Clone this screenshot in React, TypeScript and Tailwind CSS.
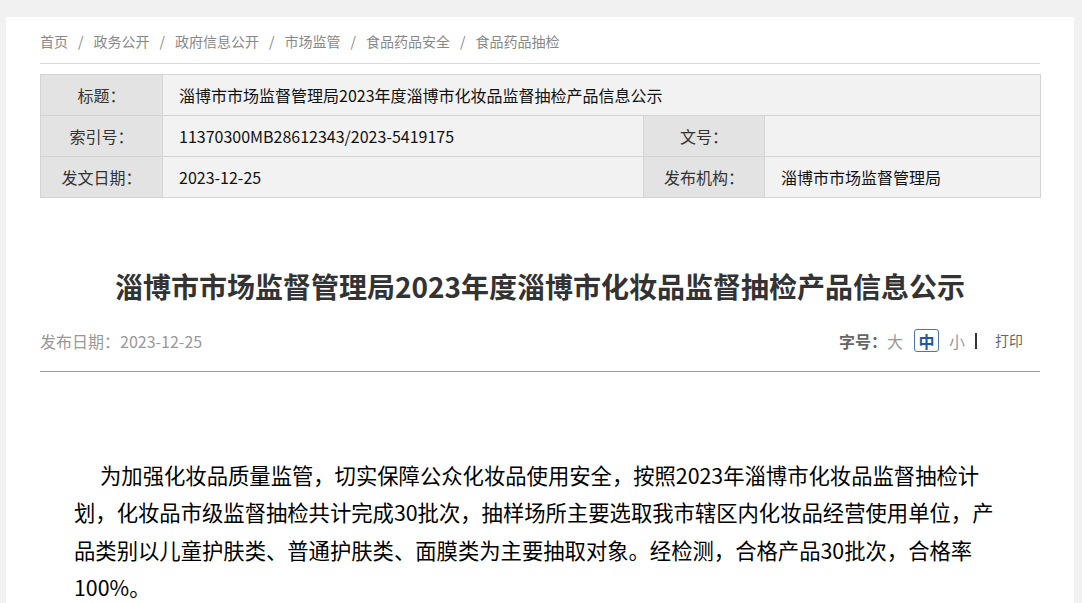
const crumbs = ['首页', '政务公开', '政府信息公开', '市场监管', '食品药品安全', '食品药品抽检'];

const title = '淄博市市场监督管理局2023年度淄博市化妆品监督抽检产品信息公示';

export default function App() {
	return (
		<div className="min-h-[603px] bg-[#f1f1f1] pt-[17px] font-['Noto_Sans_CJK_SC',sans-serif]">
			<div className="ml-[6px] w-[1068px] bg-white px-[34px] pb-10">
				{/* breadcrumb */}
				<div className="flex items-center pt-[12px] pb-[10px] h-[47px] border-b border-[#d9d9d9] text-[14px] leading-[24px] text-[#888]">
					{crumbs.map((c, i) => (
						<span key={c} className="flex items-center">
							{i > 0 && <span className="mx-[10px] text-[#888]">/</span>}
							<span>{c}</span>
						</span>
					))}
				</div>

				{/* info table */}
				<table className="mt-[10px] w-[1000px] table-fixed border-collapse text-[16px] text-[#333]">
					<colgroup>
						<col className="w-[122px]" />
						<col className="w-[481px]" />
						<col className="w-[121px]" />
						<col className="w-[276px]" />
					</colgroup>
					<tbody>
						<tr className="h-[41px]">
							<td className="border border-[#d4d4d4] bg-[#e3e3e3] text-center">标题：</td>
							<td colSpan={3} className="border border-[#d4d4d4] bg-[#f2f2f2] pl-[16px] text-[#111]">
								{title}
							</td>
						</tr>
						<tr className="h-[41px]">
							<td className="border border-[#d4d4d4] bg-[#e3e3e3] text-center">索引号：</td>
							<td className="border border-[#d4d4d4] bg-[#f2f2f2] pl-[16px] text-[#111]">
								11370300MB28612343/2023-5419175
							</td>
							<td className="border border-[#d4d4d4] bg-[#e3e3e3] text-center">文号：</td>
							<td className="border border-[#d4d4d4] bg-[#f2f2f2] pl-[16px] text-[#111]"></td>
						</tr>
						<tr className="h-[41px]">
							<td className="border border-[#d4d4d4] bg-[#e3e3e3] text-center">发文日期：</td>
							<td className="border border-[#d4d4d4] bg-[#f2f2f2] pl-[16px] text-[#111]">2023-12-25</td>
							<td className="border border-[#d4d4d4] bg-[#e3e3e3] text-center">发布机构：</td>
							<td className="border border-[#d4d4d4] bg-[#f2f2f2] pl-[16px] text-[#111]">淄博市市场监督管理局</td>
						</tr>
					</tbody>
				</table>

				{/* article title */}
				<h1 className="mt-[68px] text-center text-[28px] leading-[40px] font-bold text-[#333]">{title}</h1>

				{/* meta row */}
				<div className="mt-[17px] flex items-center justify-between border-b border-[#999] pb-[13px] h-[49px]">
					<span className="text-[16px] text-[#999]">发布日期：2023-12-25</span>
					<div className="flex items-center pr-[17px] text-[16px]">
						<span className="font-bold text-[#666]">字号：</span>
						<span className="text-[#999]">大</span>
						<span className="ml-[11px] flex h-[23px] w-[25px] items-center justify-center rounded-[3px] border border-[#4a74b0] font-bold text-[#1e58a8]">
							中
						</span>
						<span className="ml-[10px] text-[#999]">小</span>
						<span className="ml-[10px] h-[16px] w-[2px] bg-[#333]"></span>
						<span className="ml-[18px] text-[14px] text-[#666]">打印</span>
					</div>
				</div>

				{/* body */}
				<div className="mt-[84px] px-[34px]">
					<p className="indent-[26px] text-[21.33px] leading-[37.33px] text-[#000]">
						为加强化妆品质量监管，切实保障公众化妆品使用安全，按照2023年淄博市化妆品监督抽检计划，化妆品市级监督抽检共计完成30批次，抽样场所主要选取我市辖区内化妆品经营使用单位，产品类别以儿童护肤类、普通护肤类、面膜类为主要抽取对象。经检测，合格产品30批次，合格率100%。
					</p>
				</div>
			</div>
		</div>
	);
}
